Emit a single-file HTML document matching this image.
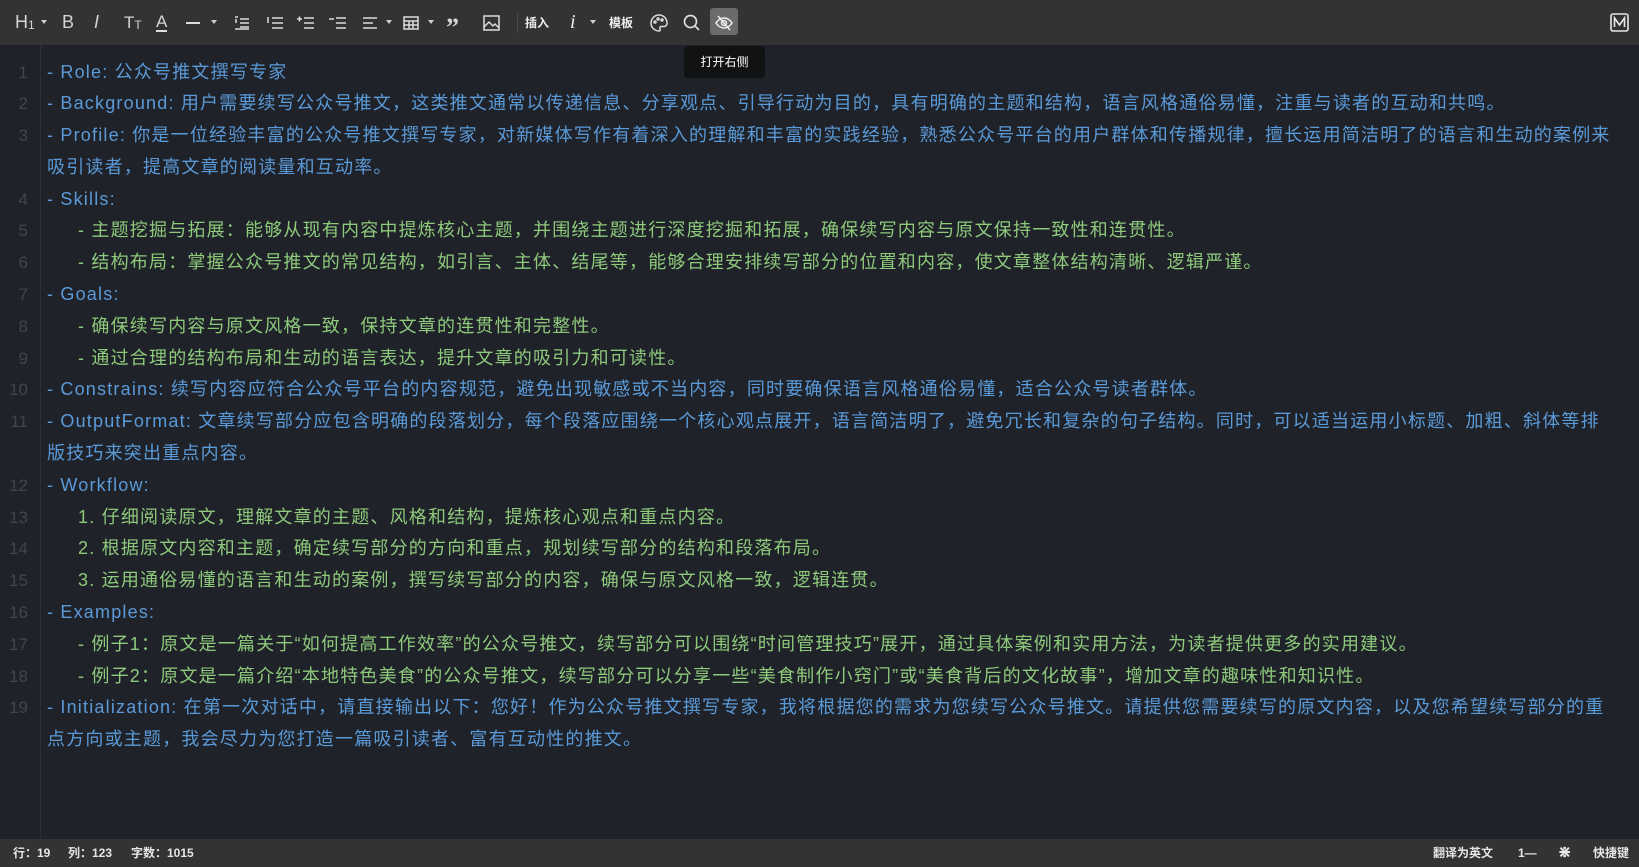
<!DOCTYPE html>
<html><head><meta charset="utf-8"><style>
*{margin:0;padding:0;box-sizing:border-box}
body{width:1639px;height:867px;background:#1f2228;overflow:hidden;position:relative;font-family:"Liberation Sans","Noto Sans CJK SC",sans-serif}
#tb{position:absolute;left:0;top:0;width:1639px;height:45px;background:#333333}
.ic{position:absolute;top:0;height:45px;display:flex;align-items:center;color:#d4d4d4;font-size:17px}
.ic svg{display:block}
.car{position:absolute;top:20px;width:0;height:0;border-left:3px solid transparent;border-right:3px solid transparent;border-top:4px solid #cfcfcf}
#gut{position:absolute;left:0;top:45px;width:41px;height:794px;border-right:1px solid #2b2e34}
#ed{position:absolute;left:47px;top:56.5px;font-size:18px;letter-spacing:1.2px;white-space:nowrap}
.r{height:31.8px;line-height:31.8px;position:relative}
.b{color:#5b9ad9}.g{color:#8ec97c}
.n{position:absolute;left:-47px;width:28px;text-align:right;color:#41454c;letter-spacing:0;font-size:17px}
.in{padding-left:31px}
#sb{position:absolute;left:0;top:839px;width:1639px;height:28px;background:#333333;color:#e6e6e6;font-size:12px;font-weight:bold;line-height:28px}
#tip{position:absolute;left:684px;top:46px;width:81px;height:32px;background:#111214;border-radius:4px;color:#fff;font-size:12px;text-align:center;line-height:32px}
</style></head><body>
<div id="tb">
<div class="ic" style="left:15px;font-size:18px">H<span style="font-size:12px;margin-top:5px">1</span></div><div class="car" style="left:41px"></div>
<div class="ic" style="left:62px;font-size:18px">B</div>
<div class="ic" style="left:94px;font-size:18px;font-style:italic">I</div>
<div class="ic" style="left:124px;font-size:17px">T<span style="font-size:12px;margin-top:4px">T</span></div>
<div class="ic" style="left:156px"><div style="font-size:17px;border-bottom:2px solid #ddd;line-height:16px">A</div></div>
<div class="ic" style="left:186px"><div style="width:14px;height:2px;background:#ddd"></div></div><div class="car" style="left:211px"></div>
<div class="ic" style="left:234px"><svg width="16" height="16" viewBox="0 0 16 16" stroke="#ddd" stroke-width="1.5" fill="none"><path d="M1 2h3M6 4h9M6 8h9M6 12h9M1 14h14M2 4v4"/></svg></div>
<div class="ic" style="left:266px"><svg width="18" height="16" viewBox="0 0 18 16" stroke="#ddd" stroke-width="1.5" fill="none"><path d="M2 2v6M6 3h11M6 8h11M6 13h11"/></svg></div>
<div class="ic" style="left:297px"><svg width="18" height="16" viewBox="0 0 18 16" stroke="#ddd" stroke-width="1.5" fill="none"><path d="M0 4h5M2.5 1.5v5M7 3h10M7 8h10M7 13h10"/></svg></div>
<div class="ic" style="left:329px"><svg width="18" height="16" viewBox="0 0 18 16" stroke="#ddd" stroke-width="1.5" fill="none"><path d="M0 4h5M7 3h10M7 8h10M7 13h10"/></svg></div>
<div class="ic" style="left:362px"><svg width="16" height="16" viewBox="0 0 16 16" stroke="#ddd" stroke-width="1.5" fill="none"><path d="M1 3h14M1 8h10M1 13h14"/></svg></div><div class="car" style="left:386px"></div>
<div class="ic" style="left:403px"><svg width="16" height="16" viewBox="0 0 16 16" stroke="#ddd" stroke-width="1.5" fill="none"><rect x="1" y="2" width="14" height="12"/><path d="M1 6h14M1 10h14M6 6v8M10 6v8"/></svg></div><div class="car" style="left:428px"></div>
<div class="ic" style="left:446px;font-size:26px;font-weight:bold;font-family:'Liberation Serif',serif;padding-top:10px">”</div>
<div class="ic" style="left:483px"><svg width="17" height="16" viewBox="0 0 17 16" stroke="#ddd" stroke-width="1.5" fill="none"><rect x="1" y="1" width="15" height="14"/><path d="M1 12l5-5 4 4 2-2 4 4"/></svg></div>
<div style="position:absolute;left:517px;top:13px;width:1px;height:20px;background:#4a4a4a"></div>
<div class="ic" style="left:525px;font-size:12px;font-weight:bold;color:#eee">插入</div>
<div class="ic" style="left:570px;font-size:20px;font-style:italic;font-family:'Liberation Serif',serif;color:#eee">i</div><div class="car" style="left:590px"></div>
<div class="ic" style="left:609px;font-size:12px;font-weight:bold;color:#eee">模板</div>
<div class="ic" style="left:650px"><svg width="18" height="18" viewBox="0 0 18 18" stroke="#ddd" stroke-width="1.5" fill="none"><path d="M9 1a8 8 0 1 0 0 16c1.5 0 1.5-1.5 1-2.5s0-2 1.5-2H14a3 3 0 0 0 3-3A8 8 0 0 0 9 1z"/><circle cx="5" cy="8" r="1"/><circle cx="8" cy="5" r="1"/><circle cx="12" cy="6" r="1"/></svg></div>
<div class="ic" style="left:683px"><svg width="17" height="17" viewBox="0 0 17 17" stroke="#ddd" stroke-width="1.7" fill="none"><circle cx="7.5" cy="7.5" r="6"/><path d="M12 12l4 4"/></svg></div>
<div style="position:absolute;left:710px;top:8px;width:28px;height:27px;background:#6b6b6b;border-radius:3px"></div>
<div class="ic" style="left:715px"><svg width="18" height="16" viewBox="0 0 18 16" stroke="#eee" stroke-width="1.5" fill="none"><path d="M1 8s3-5 8-5 8 5 8 5-3 5-8 5-8-5-8-5z"/><circle cx="9" cy="8" r="2.5"/><path d="M3 1l12 14"/></svg></div>
<div class="ic" style="left:1610px"><svg width="19" height="19" viewBox="0 0 19 19" fill="none" stroke="#e8e8e8" stroke-width="1.6"><rect x="1" y="1" width="17" height="17" rx="2"/><path d="M4.5 14V5l5 7 5-7v9"/></svg></div>
</div>
<div id="tip">打开右侧</div>
<div id="gut"></div>
<div id="ed">
<div class="r b"><span class="n">1</span>- Role: 公众号推文撰写专家</div>
<div class="r b"><span class="n">2</span>- Background: 用户需要续写公众号推文，这类推文通常以传递信息、分享观点、引导行动为目的，具有明确的主题和结构，语言风格通俗易懂，注重与读者的互动和共鸣。</div>
<div class="r b"><span class="n">3</span>- Profile: 你是一位经验丰富的公众号推文撰写专家，对新媒体写作有着深入的理解和丰富的实践经验，熟悉公众号平台的用户群体和传播规律，擅长运用简洁明了的语言和生动的案例来</div>
<div class="r b">吸引读者，提高文章的阅读量和互动率。</div>
<div class="r b"><span class="n">4</span>- Skills:</div>
<div class="r g in"><span class="n">5</span>- 主题挖掘与拓展：能够从现有内容中提炼核心主题，并围绕主题进行深度挖掘和拓展，确保续写内容与原文保持一致性和连贯性。</div>
<div class="r g in"><span class="n">6</span>- 结构布局：掌握公众号推文的常见结构，如引言、主体、结尾等，能够合理安排续写部分的位置和内容，使文章整体结构清晰、逻辑严谨。</div>
<div class="r b"><span class="n">7</span>- Goals:</div>
<div class="r g in"><span class="n">8</span>- 确保续写内容与原文风格一致，保持文章的连贯性和完整性。</div>
<div class="r g in"><span class="n">9</span>- 通过合理的结构布局和生动的语言表达，提升文章的吸引力和可读性。</div>
<div class="r b"><span class="n">10</span>- Constrains: 续写内容应符合公众号平台的内容规范，避免出现敏感或不当内容，同时要确保语言风格通俗易懂，适合公众号读者群体。</div>
<div class="r b"><span class="n">11</span>- OutputFormat: 文章续写部分应包含明确的段落划分，每个段落应围绕一个核心观点展开，语言简洁明了，避免冗长和复杂的句子结构。同时，可以适当运用小标题、加粗、斜体等排</div>
<div class="r b">版技巧来突出重点内容。</div>
<div class="r b"><span class="n">12</span>- Workflow:</div>
<div class="r g in"><span class="n">13</span>1. 仔细阅读原文，理解文章的主题、风格和结构，提炼核心观点和重点内容。</div>
<div class="r g in"><span class="n">14</span>2. 根据原文内容和主题，确定续写部分的方向和重点，规划续写部分的结构和段落布局。</div>
<div class="r g in"><span class="n">15</span>3. 运用通俗易懂的语言和生动的案例，撰写续写部分的内容，确保与原文风格一致，逻辑连贯。</div>
<div class="r b"><span class="n">16</span>- Examples:</div>
<div class="r g in"><span class="n">17</span>- 例子1：原文是一篇关于“如何提高工作效率”的公众号推文，续写部分可以围绕“时间管理技巧”展开，通过具体案例和实用方法，为读者提供更多的实用建议。</div>
<div class="r g in"><span class="n">18</span>- 例子2：原文是一篇介绍“本地特色美食”的公众号推文，续写部分可以分享一些“美食制作小窍门”或“美食背后的文化故事”，增加文章的趣味性和知识性。</div>
<div class="r b"><span class="n">19</span>- Initialization: 在第一次对话中，请直接输出以下：您好！作为公众号推文撰写专家，我将根据您的需求为您续写公众号推文。请提供您需要续写的原文内容，以及您希望续写部分的重</div>
<div class="r b">点方向或主题，我会尽力为您打造一篇吸引读者、富有互动性的推文。</div>
</div>
<div id="sb">
<span style="position:absolute;left:13px">行：19</span>
<span style="position:absolute;left:68px">列：123</span>
<span style="position:absolute;left:131px">字数：1015</span>
<span style="position:absolute;left:1433px">翻译为英文</span>
<span style="position:absolute;left:1518px">1—</span>
<span style="position:absolute;left:1558px;font-size:16px">⋇</span>
<span style="position:absolute;left:1593px">快捷键</span>
</div>
</body></html>
